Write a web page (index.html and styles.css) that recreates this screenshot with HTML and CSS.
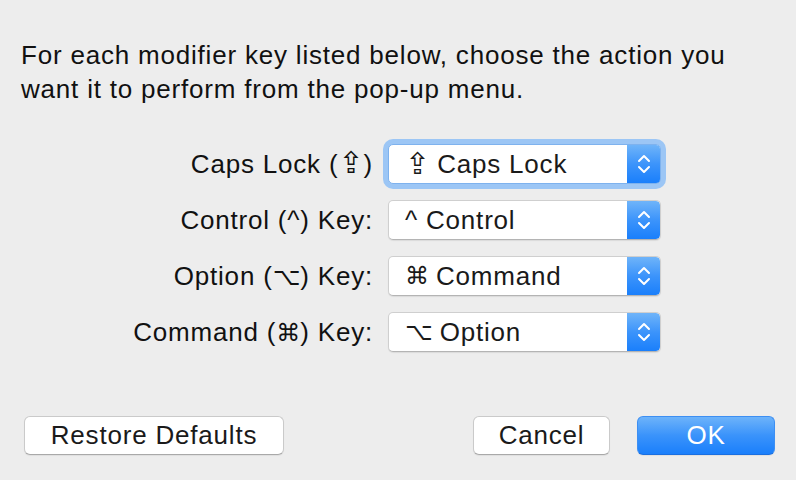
FILE: index.html
```html
<!DOCTYPE html>
<html lang="en">
  <head>
    <meta charset="UTF-8" />
    <title>Modifier Keys</title>
    <link rel="stylesheet" href="styles.css">
  </head>
  <body>
    <main class="dialog">
      <p class="intro">
        For each modifier key listed below, choose the action you<br />
        want it to perform from the pop-up menu.
      </p>

      <section class="keys">
        <label class="key-label">Caps Lock (<span class="sym caps">⇪</span>)</label>
        <div class="popup focused">
          <span class="popup-value"><span class="sym caps">⇪</span> Caps Lock</span>
          <span class="stepper">
            <svg width="14" height="24" viewBox="0 0 14 24"><path d="M2 9 L7 4 L12 9 M2 15 L7 20 L12 15" fill="none" stroke="#fff" stroke-width="2" stroke-linecap="round" stroke-linejoin="round"/></svg>
          </span>
        </div>

        <label class="key-label">Control (^) Key:</label>
        <div class="popup">
          <span class="popup-value">^ Control</span>
          <span class="stepper">
            <svg width="14" height="24" viewBox="0 0 14 24"><path d="M2 9 L7 4 L12 9 M2 15 L7 20 L12 15" fill="none" stroke="#fff" stroke-width="2" stroke-linecap="round" stroke-linejoin="round"/></svg>
          </span>
        </div>

        <label class="key-label">Option (<span class="sym">⌥</span>) Key:</label>
        <div class="popup">
          <span class="popup-value"><span class="sym">⌘</span> Command</span>
          <span class="stepper">
            <svg width="14" height="24" viewBox="0 0 14 24"><path d="M2 9 L7 4 L12 9 M2 15 L7 20 L12 15" fill="none" stroke="#fff" stroke-width="2" stroke-linecap="round" stroke-linejoin="round"/></svg>
          </span>
        </div>

        <label class="key-label">Command (<span class="sym">⌘</span>) Key:</label>
        <div class="popup">
          <span class="popup-value"><span class="sym">⌥</span> Option</span>
          <span class="stepper">
            <svg width="14" height="24" viewBox="0 0 14 24"><path d="M2 9 L7 4 L12 9 M2 15 L7 20 L12 15" fill="none" stroke="#fff" stroke-width="2" stroke-linecap="round" stroke-linejoin="round"/></svg>
          </span>
        </div>
      </section>

      <footer class="actions">
        <button class="btn restore">Restore Defaults</button>
        <div class="right">
          <button class="btn cancel">Cancel</button>
          <button class="btn primary">OK</button>
        </div>
      </footer>
    </main>
  </body>
</html>
```

FILE: styles.css
```css
/* Reset */
* {
  margin: 0;
  padding: 0;
  box-sizing: border-box;
}

body {
  font-family: "Liberation Sans", Arial, sans-serif;
  background: #ededed;
  color: #1a1a1a;
  width: 796px;
  height: 480px;
  overflow: hidden;
}

.dialog {
  display: flex;
  flex-direction: column;
  padding: 38px 21px 0 21px;
  height: 480px;
}

.intro {
  font-size: 26px;
  line-height: 34px;
  letter-spacing: 0.8px;
  color: #111;
}

.keys {
  display: grid;
  grid-template-columns: 352px 273px;
  column-gap: 15px;
  row-gap: 16px;
  margin-top: 38px;
}

.key-label {
  font-size: 26px;
  letter-spacing: 0.8px;
  text-align: right;
  align-self: center;
  color: #111;
}

.sym {
  font-family: "DejaVu Sans", sans-serif;
  font-size: 24px;
  letter-spacing: 0;
}

.sym.caps {
  font-size: 30px;
  line-height: 1;
}

.popup {
  height: 40px;
  display: flex;
  align-items: stretch;
  background: #fff;
  border: 1px solid #cfcfcf;
  border-bottom-color: #b4b4b4;
  border-radius: 5px;
  box-shadow: 0 1px 1px rgba(0, 0, 0, 0.08);
  overflow: hidden;
}

.popup.focused {
  overflow: visible;
  box-shadow: 0 0 0 5px #9cc6f5;
  border-color: #7eb2ee;
}

.popup-value {
  flex: 1;
  display: flex;
  align-items: center;
  gap: 7px;
  padding-left: 16px;
  font-size: 26px;
  letter-spacing: 0.8px;
  color: #1a1a1a;
}

.stepper {
  width: 33px;
  display: flex;
  align-items: center;
  justify-content: center;
  background: linear-gradient(#6fb4f9 0%, #3c94fb 50%, #1a7ffb 100%);
  border-radius: 0 4px 4px 0;
}

.actions {
  display: flex;
  justify-content: space-between;
  align-items: center;
  margin-top: auto;
  margin-bottom: 25px;
  padding-left: 3px;
}

.actions .right {
  display: flex;
  gap: 27px;
}

.btn {
  font-family: "Liberation Sans", Arial, sans-serif;
  font-size: 26px;
  letter-spacing: 0.8px;
  height: 39px;
  background: #fff;
  color: #1a1a1a;
  border: 1px solid #cacaca;
  border-bottom-color: #a9a9a9;
  border-radius: 6px;
  box-shadow: 0 1px 1px rgba(0, 0, 0, 0.06);
}

.btn.restore {
  width: 260px;
}

.btn.cancel {
  width: 137px;
}

.btn.primary {
  width: 138px;
  color: #fff;
  border: 1px solid #3d8ff3;
  border-bottom-color: #1a6fe0;
  background: linear-gradient(#6db3fa 0%, #3a93fb 50%, #1a7ffb 100%);
}
```
